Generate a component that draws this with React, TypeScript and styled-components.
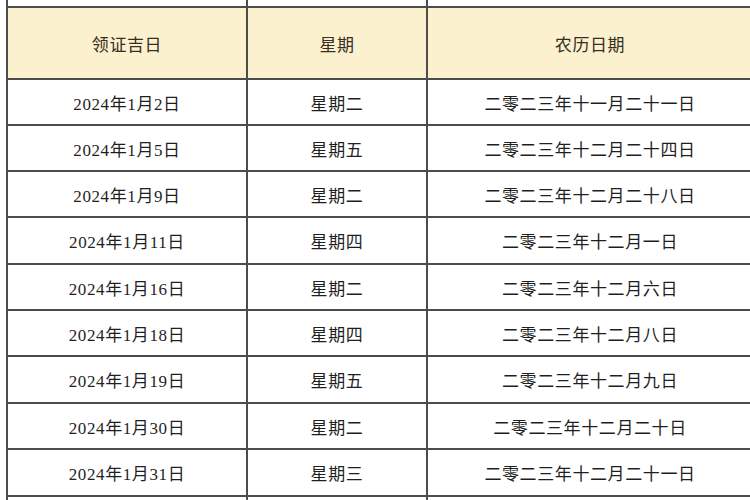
import React from 'react';
import styled, { createGlobalStyle } from 'styled-components';

const GlobalStyle = createGlobalStyle`
  html, body {
    margin: 0;
    padding: 0;
    background: #ffffff;
    overflow: hidden;
  }
`;

const Page = styled.div`
  width: 750px;
  height: 500px;
  overflow: hidden;
  background: #ffffff;
`;

const Table = styled.table`
  border-collapse: collapse;
  table-layout: fixed;
  width: 746px;
  margin-left: 6px;
  font-family: 'Liberation Serif', 'Noto Sans CJK SC', serif;
  font-size: 17px;
  letter-spacing: 0.6px;
  color: #1f1f1f;
`;

const Cell = styled.td<{ $head?: boolean; $slice?: boolean; $tall?: boolean }>`
  border: 2px solid #4c4c4c;
  border-top: ${(p) => (p.$slice ? 'none' : '2px solid #4c4c4c')};
  text-align: center;
  vertical-align: middle;
  padding: 0;
  height: ${(p) =>
    p.$slice ? '6px' : p.$head ? '70px' : p.$tall ? '45px' : '44px'};
  background: ${(p) => (p.$head ? '#fcf1cf' : '#ffffff')};
  color: ${(p) => (p.$head ? '#352e22' : '#1f1f1f')};
`;

const rows = [
  ['2024年1月2日', '星期二', '二零二三年十一月二十一日'],
  ['2024年1月5日', '星期五', '二零二三年十二月二十四日'],
  ['2024年1月9日', '星期二', '二零二三年十二月二十八日'],
  ['2024年1月11日', '星期四', '二零二三年十二月一日'],
  ['2024年1月16日', '星期二', '二零二三年十二月六日'],
  ['2024年1月18日', '星期四', '二零二三年十二月八日'],
  ['2024年1月19日', '星期五', '二零二三年十二月九日'],
  ['2024年1月30日', '星期二', '二零二三年十二月二十日'],
  ['2024年1月31日', '星期三', '二零二三年十二月二十一日'],
];

// rows that are a pixel taller in the source picture
const tallRows = new Set([3, 6, 8]);

export default function App() {
  return (
    <Page>
      <GlobalStyle />
      <Table>
        <colgroup>
          <col style={{ width: 240 }} />
          <col style={{ width: 180 }} />
          <col style={{ width: 326 }} />
        </colgroup>
        <tbody>
          <tr>
            <Cell $slice />
            <Cell $slice />
            <Cell $slice />
          </tr>
          <tr>
            <Cell $head>领证吉日</Cell>
            <Cell $head>星期</Cell>
            <Cell $head>农历日期</Cell>
          </tr>
          {rows.map((r, i) => (
            <tr key={r[0]}>
              <Cell $tall={tallRows.has(i)}>{r[0]}</Cell>
              <Cell $tall={tallRows.has(i)}>{r[1]}</Cell>
              <Cell $tall={tallRows.has(i)}>{r[2]}</Cell>
            </tr>
          ))}
          <tr>
            <Cell />
            <Cell />
            <Cell />
          </tr>
        </tbody>
      </Table>
    </Page>
  );
}
